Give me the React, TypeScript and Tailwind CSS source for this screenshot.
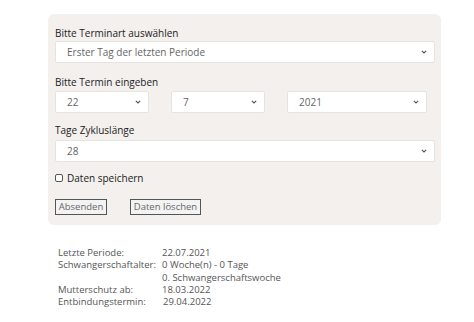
import React from "react";

const Chevron = () => (
  <svg width="6" height="4" viewBox="0 0 6 4" className="shrink-0">
    <path d="M0.8 0.8 L3 3 L5.2 0.8" fill="none" stroke="#555" strokeWidth="1.1" />
  </svg>
);

const Sel = ({ value, className }: { value: string; className: string }) => (
  <div
    className={`flex items-center justify-between h-[22px] bg-white border border-[#e6e3e0] rounded-[2px] pl-[11px] pr-[7px] text-[10px] text-[#666] ${className}`}
  >
    <span>{value}</span>
    <Chevron />
  </div>
);

export default function App() {
  const font = { fontFamily: "'Open Sans', 'Liberation Sans', sans-serif" };
  return (
    <div className="w-[474px] h-[322px] bg-white" style={font}>
      <div className="pt-[14px] pl-[48px]">
        <div className="w-[393px] h-[211px] bg-[#f3f0ee] rounded-[6px] pl-[7px] pr-[6px] pt-[12px] flex flex-col">
          <div className="text-[10px] text-[#222] leading-[14px]">Bitte Terminart auswählen</div>
          <Sel value="Erster Tag der letzten Periode" className="mt-[1px] w-[380px]" />
          <div className="text-[10px] text-[#222] leading-[14px] mt-[12px]">Bitte Termin eingeben</div>
          <div className="flex mt-[2px]">
            <Sel value="22" className="w-[94px]" />
            <Sel value="7" className="w-[94px] ml-[22px]" />
            <Sel value="2021" className="w-[140px] ml-[22px]" />
          </div>
          <div className="text-[10px] text-[#222] leading-[14px] mt-[10px]">Tage Zykluslänge</div>
          <Sel value="28" className="mt-[3px] w-[380px]" />
          <div className="flex items-center mt-[9px] text-[10px] text-[#222] leading-[14px]">
            <span className="inline-block w-[8px] h-[8px] border border-[#555] rounded-[2px] bg-white mr-[4px]" />
            Daten speichern
          </div>
          <div className="flex mt-[14px]">
            <div className="h-[16px] w-[52px] border border-[#555] bg-[#f3f3f3] text-[9.5px] text-[#666] flex items-center justify-center">Absenden</div>
            <div className="h-[16px] w-[71px] border border-[#555] bg-[#f3f3f3] text-[9.5px] text-[#666] flex items-center justify-center ml-[23px]">Daten löschen</div>
          </div>
        </div>
      </div>
      <div className="mt-[22px] pl-[58px] text-[9.5px] text-[#555] leading-[12.3px] grid grid-cols-[104px_1fr]">
        <div>Letzte Periode:</div>
        <div>22.07.2021</div>
        <div>Schwangerschaftalter:</div>
        <div>0 Woche(n) - 0 Tage</div>
        <div></div>
        <div>0. Schwangerschaftswoche</div>
        <div>Mutterschutz ab:</div>
        <div>18.03.2022</div>
        <div>Entbindungstermin:</div>
        <div className="pl-[1px]">29.04.2022</div>
      </div>
    </div>
  );
}
